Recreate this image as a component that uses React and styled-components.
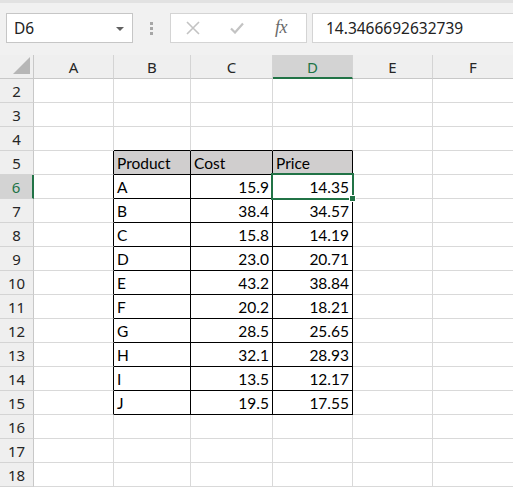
import React from "react";
import styled, { createGlobalStyle, css } from "styled-components";

const GlobalStyle = createGlobalStyle`
  html, body { margin: 0; padding: 0; background: #ffffff; }
  body { overflow: hidden; width: 513px; height: 487px; }
  * { box-sizing: border-box; }
`;

const GREEN = "#217346";
const GRID = "#d9d9d9";

const Page = styled.div`
  width: 513px;
  height: 487px;
  overflow: hidden;
  display: flex;
  flex-direction: column;
  font-family: "Noto Sans", "Open Sans", sans-serif;
`;

const Toolbar = styled.div`
  height: 55px;
  flex: none;
  display: flex;
  align-items: flex-start;
  padding: 10px 0 0 6px;
  background: #f1f1f1;
  border-top: 3px solid #e2e2e2;
`;

const NameBox = styled.div`
  width: 127px;
  height: 30px;
  background: #ffffff;
  border: 1px solid #c6c6c6;
  display: flex;
  align-items: center;
  justify-content: space-between;
  padding: 0 8px 0 7px;
`;

const NameText = styled.span`
  font-size: 15.5px;
  color: #222222;
`;

const DropArrow = styled.span`
  width: 0;
  height: 0;
  border-left: 4px solid transparent;
  border-right: 4px solid transparent;
  border-top: 4px solid #606060;
  margin-top: 1px;
`;

const Grip = styled.div`
  width: 37px;
  height: 30px;
  display: flex;
  flex-direction: column;
  align-items: center;
  justify-content: center;
  gap: 2px;
`;

const Dot = styled.span`
  width: 3px;
  height: 3px;
  background: #a6a6a6;
`;

const FormulaTools = styled.div`
  width: 137px;
  height: 30px;
  background: #ffffff;
  border: 1px solid #d4d4d4;
  display: flex;
  align-items: center;
  padding-left: 15px;
`;

const ToolIcon = styled.svg`
  flex: none;
  margin-right: ${(p) => p.$gap}px;
`;

const FxLabel = styled.span`
  font-family: "Liberation Serif", "DejaVu Serif", serif;
  font-style: italic;
  font-size: 18px;
  color: #6a6a6a;
  letter-spacing: -0.5px;
  margin-top: -2px;
`;

const FormulaInput = styled.div`
  flex: 1;
  height: 30px;
  margin-left: 5px;
  background: #ffffff;
  border: 1px solid #d4d4d4;
  border-right: none;
  display: flex;
  align-items: center;
  padding-left: 13px;
  font-size: 15.5px;
  color: #222222;
`;

const Sheet = styled.div`
  display: grid;
  grid-template-columns: 34px 80px 77px 82px 80px 80px 81px;
  grid-template-rows: 24px repeat(17, 24px);
`;

const headerBase = css`
  background: #efefef;
  display: flex;
  align-items: center;
  justify-content: center;
  font-size: 15px;
  color: #262626;
`;

const Corner = styled.div`
  ${headerBase};
  border-right: 1px solid #c8c8c8;
  border-bottom: 1px solid #c8c8c8;
  position: relative;
`;

const CornerTriangle = styled.span`
  position: absolute;
  right: 3px;
  bottom: 4px;
  width: 0;
  height: 0;
  border-left: 17px solid transparent;
  border-bottom: 17px solid #b6b6b6;
`;

const ColHeader = styled.div`
  ${headerBase};
  padding-top: 1px;
  border-right: 1px solid #d4d4d4;
  border-bottom: ${(p) => (p.$selected ? `2px solid ${GREEN}` : "1px solid #c8c8c8")};
  ${(p) =>
    p.$selected &&
    css`
      background: #d3d3d3;
      color: ${GREEN};
    `}
`;

const RowHeader = styled.div`
  ${headerBase};
  border-bottom: 1px solid #d4d4d4;
  border-right: ${(p) => (p.$selected ? `2px solid ${GREEN}` : "1px solid #c8c8c8")};
  ${(p) =>
    p.$selected &&
    css`
      background: #d3d3d3;
      color: ${GREEN};
    `}
`;

const Cell = styled.div`
  position: relative;
  display: flex;
  align-items: flex-end;
  justify-content: ${(p) => (p.$align === "right" ? "flex-end" : "flex-start")};
  padding: 0 3px 2px 3px;
  font-family: Lato, "Open Sans", sans-serif;
  font-size: 15.5px;
  line-height: 18px;
  color: #000000;
  background: ${(p) => p.$fill || "#ffffff"};
  border-right: 1px solid ${(p) => (p.$right ? "#000000" : GRID)};
  border-bottom: 1px solid ${(p) => (p.$bottom ? "#000000" : GRID)};
`;

const SelectionBox = styled.span`
  position: absolute;
  z-index: 2;
  left: -2px;
  top: -2px;
  width: 83px;
  height: 27px;
  border: 2px solid ${GREEN};
  pointer-events: none;
`;

const FillHandle = styled.span`
  position: absolute;
  right: -4px;
  bottom: -4px;
  width: 7px;
  height: 7px;
  background: ${GREEN};
  border: 1px solid #ffffff;
`;

const columns = ["A", "B", "C", "D", "E", "F"];

const data = [
  ["A", "15.9", "14.35"],
  ["B", "38.4", "34.57"],
  ["C", "15.8", "14.19"],
  ["D", "23.0", "20.71"],
  ["E", "43.2", "38.84"],
  ["F", "20.2", "18.21"],
  ["G", "28.5", "25.65"],
  ["H", "32.1", "28.93"],
  ["I", "13.5", "12.17"],
  ["J", "19.5", "17.55"],
];

function cellContent(row, col) {
  if (row === 5) {
    if (col === 1) return { text: "Product" };
    if (col === 2) return { text: "Cost" };
    if (col === 3) return { text: "Price" };
  }
  if (row >= 6 && row <= 15 && col >= 1 && col <= 3) {
    const v = data[row - 6][col - 1];
    return { text: v, align: col === 1 ? "left" : "right" };
  }
  return { text: "" };
}

export default function App() {
  const rows = [];
  for (let r = 2; r <= 18; r++) rows.push(r);

  return (
    <Page>
      <GlobalStyle />
      <Toolbar>
        <NameBox>
          <NameText>D6</NameText>
          <DropArrow />
        </NameBox>
        <Grip>
          <Dot />
          <Dot />
          <Dot />
        </Grip>
        <FormulaTools>
          <ToolIcon $gap={30} width="14" height="14" viewBox="0 0 14 14">
            <path d="M1 1 L13 13 M13 1 L1 13" stroke="#c3c3c3" strokeWidth="1.6" fill="none" />
          </ToolIcon>
          <ToolIcon $gap={31} width="14" height="12" viewBox="0 0 14 12">
            <path d="M1 6.5 L5 10.5 L13 1.5" stroke="#c3c3c3" strokeWidth="2.2" fill="none" />
          </ToolIcon>
          <FxLabel>fx</FxLabel>
        </FormulaTools>
        <FormulaInput>14.3466692632739</FormulaInput>
      </Toolbar>
      <Sheet>
        <Corner>
          <CornerTriangle />
        </Corner>
        {columns.map((c) => (
          <ColHeader key={c} $selected={c === "D"}>
            {c}
          </ColHeader>
        ))}
        {rows.map((r) => (
          <React.Fragment key={r}>
            <RowHeader $selected={r === 6}>{r}</RowHeader>
            {columns.map((c, ci) => {
              const { text, align } = cellContent(r, ci);
              const inTableRows = r >= 5 && r <= 15;
              const right = inTableRows && ci >= 0 && ci <= 3;
              const bottom = r >= 4 && r <= 15 && ci >= 1 && ci <= 3;
              const fill = r === 5 && ci >= 1 && ci <= 3 ? "#d0cece" : undefined;
              const selected = r === 6 && ci === 3;
              return (
                <Cell key={c} $align={align} $right={right} $bottom={bottom} $fill={fill}>
                  {text}
                  {selected && (
                    <SelectionBox>
                      <FillHandle />
                    </SelectionBox>
                  )}
                </Cell>
              );
            })}
          </React.Fragment>
        ))}
      </Sheet>
    </Page>
  );
}
